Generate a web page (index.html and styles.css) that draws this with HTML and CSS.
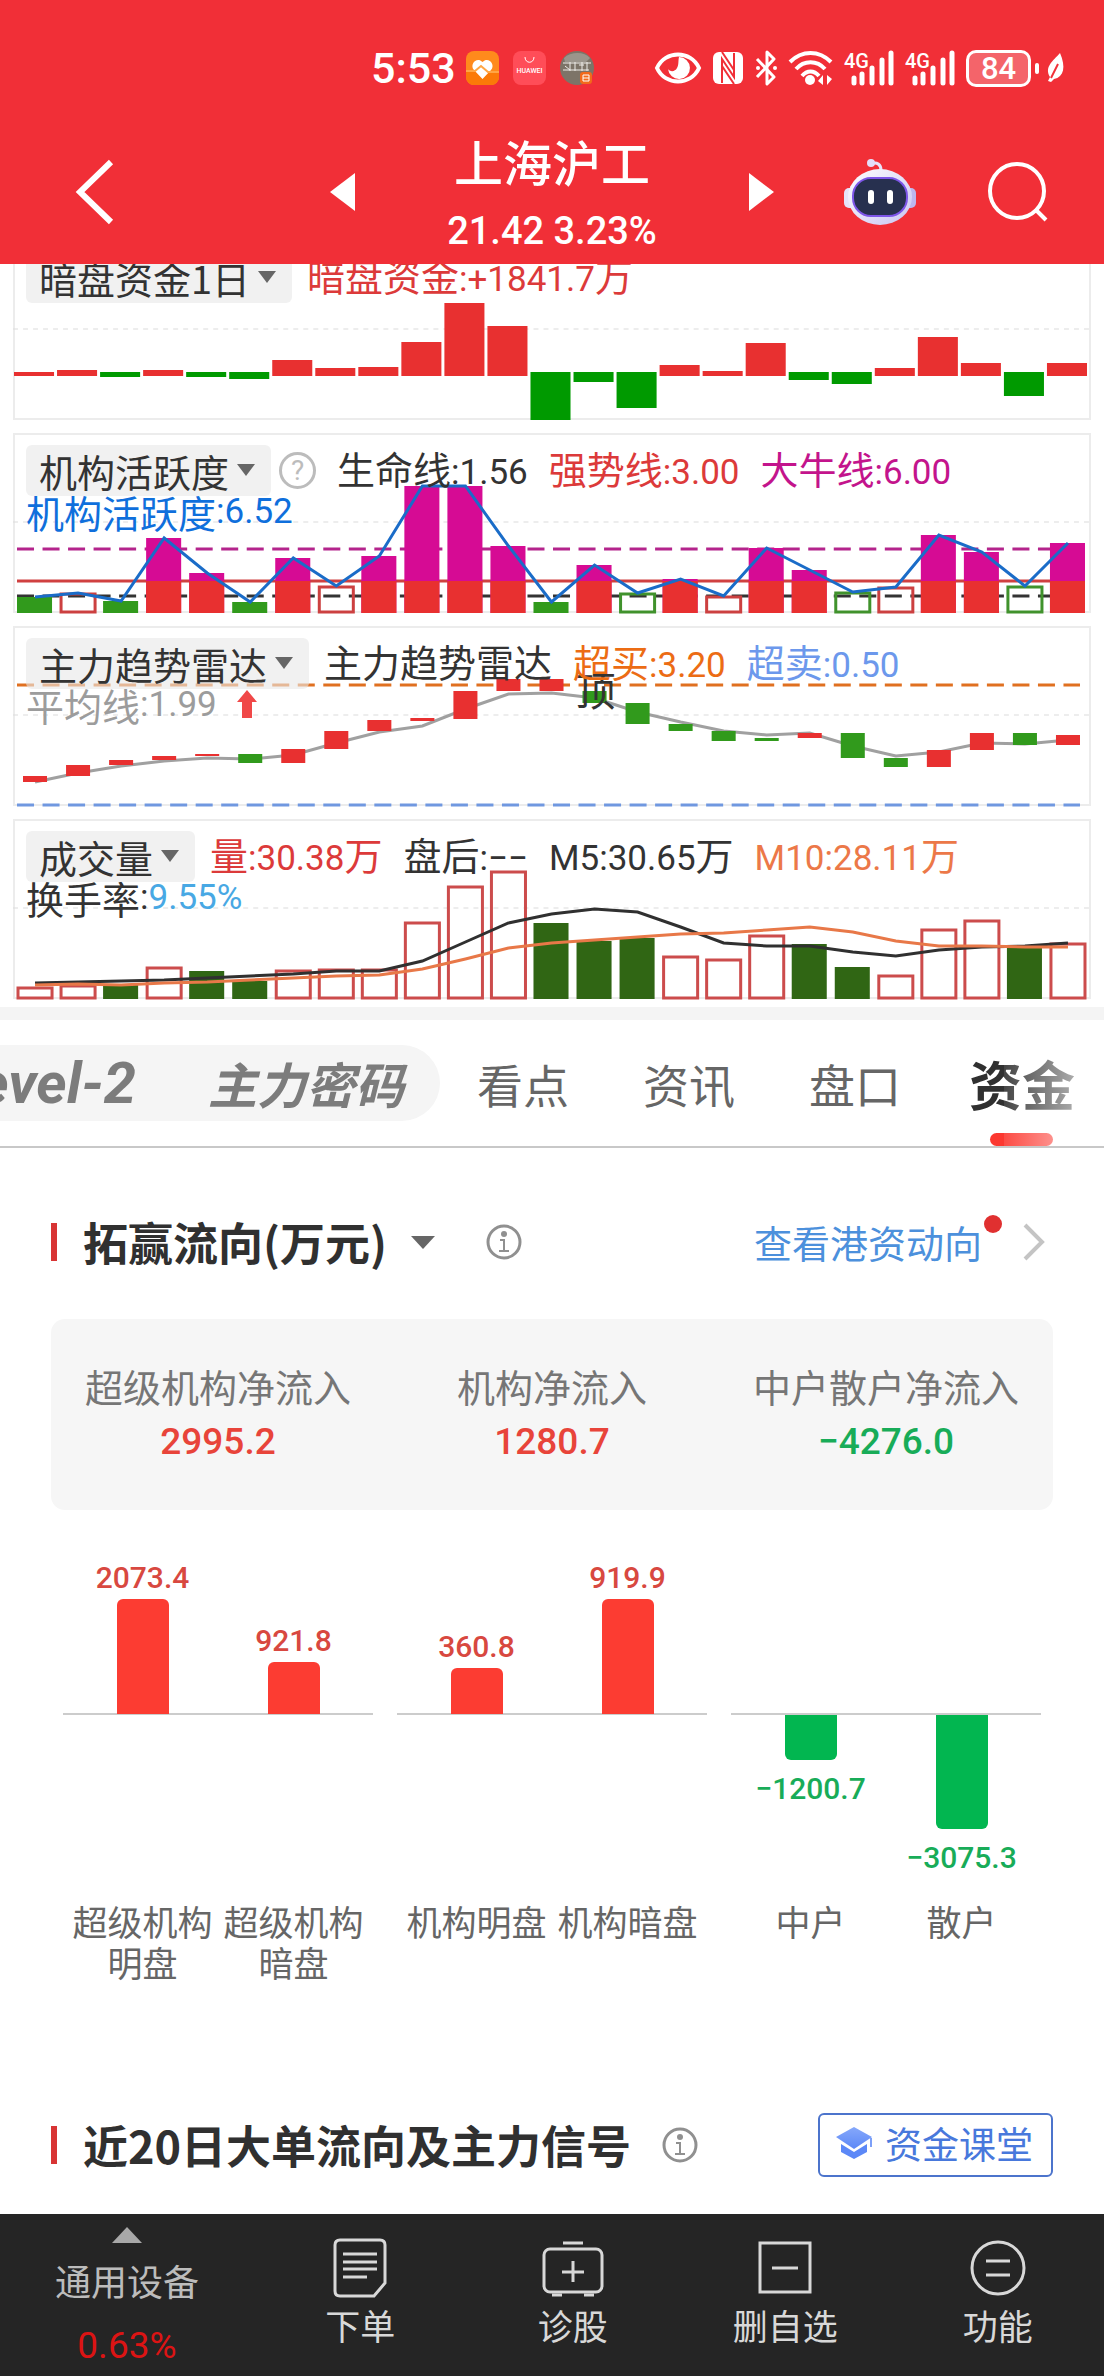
FILE: index.html
```
<!DOCTYPE html>
<html lang="zh-CN">
<head>
    <meta charset="UTF-8">
    <meta name="viewport" content="width=device-width, initial-scale=1.0">
    <title>上海沪工 21.42 3.23%</title>
    <link rel="stylesheet" href="styles.css">
</head>
<body>
<header class="top">
    <div class="status">
        <span class="clock">5:53</span>
        <div class="status-apps">
            <svg width="33" height="34" viewBox="0 0 33 34">
                <rect width="33" height="34" rx="8" fill="#ff8a1c"/>
                <path d="M0 20h33v6a8 8 0 0 1-8 8H8a8 8 0 0 1-8-8z" fill="#fb7a08"/>
                <path d="M16.500 28 8 19c-5-6 3-14 8.500-8C22 5 30 13 25 19z" fill="#fff"/>
                <path d="M0 20h9l6-5 7 6h11" fill="none" stroke="#ffa645" stroke-width="2"/>
            </svg>
            <svg width="33" height="34" viewBox="0 0 33 34">
                <rect width="33" height="34" rx="8" fill="#ff4d58"/>
                <path d="M12 6c0 7 9 7 9 0" fill="none" stroke="#fff" stroke-width="1"/>
                <text x="16.500" y="22" class="brand">HUAWEI</text>
            </svg>
            <svg width="34" height="34" viewBox="0 0 34 34">
                <circle cx="17" cy="17" r="17" fill="#7d7468"/>
                <path d="M4 7c6-6 20-7 26 0l-4 4H5z" fill="#9b958c"/>
                <path d="M3 12h28M5 15l5 4M10 11v9M15 11v9M19 14h5M22 11v9M27 11v9M3 19h26" stroke="#f0eeea" stroke-width="1"/>
                <rect x="20" y="21" width="12" height="12" rx="3" fill="#f26a1b"/>
                <path d="M23 24h6v6h-6zM23 27h6" fill="none" stroke="#fff" stroke-width="1"/>
            </svg>
        </div>
        <div class="status-icons">
            <svg width="46" height="34" viewBox="0 0 46 34">
                <path d="M2 17C10-1 36-1 44 17 36 35 10 35 2 17z" fill="none" stroke="#fff" stroke-width="4"/>
                <path d="M24 6a11 11 0 1 1-11 12c2 3 7 3 9-1 2-3 1-7 2-11z" fill="#fff"/>
            </svg>
            <svg width="32" height="34" viewBox="0 0 32 34">
                <rect x="1" y="1" width="30" height="32" rx="6" fill="#fff"/>
                <path d="M10 32V8l12 18V2" fill="none" stroke="#f12f37" stroke-width="2"/>
                <path d="M10 1l12 18" fill="none" stroke="#f12f37" stroke-width="2"/>
                <path d="M10 15l12 18" fill="none" stroke="#f12f37" stroke-width="2"/>
            </svg>
            <svg width="22" height="36" viewBox="0 0 22 36">
                <path d="M2 9 19 27l-7 7V2l7 7L2 27" fill="none" stroke="#fff" stroke-width="3" stroke-linejoin="round"/>
                <circle cx="3" cy="18" r="2" fill="#fff"/><circle cx="20" cy="18" r="2" fill="#fff"/>
            </svg>
            <svg width="45" height="36" viewBox="0 0 45 36">
                <path d="M2 12c12-12 29-12 41 0M8 19c8-9 21-9 29 0M14 26c5-6 12-6 17 0" fill="none" stroke="#fff" stroke-width="4"/>
                <circle cx="22" cy="30" r="5" fill="#fff"/>
                <path d="M30 31l5-6v10zM44 29l-5 6V25z" fill="#fff"/>
            </svg>
            <svg width="50" height="36" viewBox="0 0 50 36">
                <text x="0" y="18" class="net">4G</text>
                <path d="M10 28v5M18 24v9M28 18v15M38 10v23M47 3v30" stroke="#fff" stroke-width="5" stroke-linecap="round"/>
            </svg>
            <svg width="50" height="36" viewBox="0 0 50 36">
                <text x="0" y="18" class="net">4G</text>
                <path d="M10 28v5M18 24v9M28 18v15M38 10v23M47 3v30" stroke="#fff" stroke-width="5" stroke-linecap="round"/>
            </svg>
            <span class="battery">84</span>
            <svg width="18" height="30" viewBox="0 0 18 30">
                <path d="M14 0c6 14 4 24-6 26l-3 3-3-1 2-4C-2 14 7 8 14 0z" fill="#fff"/>
                <path d="M5 25 12 11" stroke="#f12f37" stroke-width="2"/>
            </svg>
        </div>
    </div>
    <div class="nav">
        <div class="nav-left">
            <button class="icon-btn" aria-label="返回">
                <svg width="38" height="66" viewBox="0 0 38 66"><path d="M35 3 4 33l31 30" fill="none" stroke="#fff" stroke-width="6"/></svg>
            </button>
        </div>
        <div class="nav-center">
            <button class="icon-btn" aria-label="上一只">
                <svg width="25" height="38" viewBox="0 0 25 38"><path d="M25 0v38L0 19z" fill="#fff"/></svg>
            </button>
            <div class="stock">
                <h1>上海沪工</h1>
                <p>21.42 3.23%</p>
            </div>
            <button class="icon-btn" aria-label="下一只">
                <svg width="25" height="38" viewBox="0 0 25 38"><path d="M0 0v38l25-19z" fill="#fff"/></svg>
            </button>
        </div>
        <div class="nav-right">
            <button class="icon-btn" aria-label="智能助手">
                <svg width="72" height="68" viewBox="0 0 72 68">
                    <defs>
                        <linearGradient id="shell" x1="0" y1="0" x2="1" y2="1">
                            <stop offset="0" stop-color="#fff"/><stop offset="1" stop-color="#c9c4f2"/>
                        </linearGradient>
                    </defs>
                    <path d="M27 6c6-3 10 1 10 6" fill="none" stroke="#e8e4fb" stroke-width="3"/>
                    <circle cx="27" cy="5" r="4" fill="#e4defa"/>
                    <rect x="0" y="30" width="12" height="20" rx="5" fill="#e6e3fa"/>
                    <rect x="60" y="30" width="12" height="20" rx="5" fill="#bdb6ee"/>
                    <ellipse cx="36" cy="39" rx="32" ry="28" fill="url(#shell)"/>
                    <rect x="9" y="20" width="54" height="38" rx="18" fill="#27304f" stroke="#7d55e8" stroke-width="2"/>
                    <rect x="24" y="32" width="6" height="14" rx="3" fill="#fff"/>
                    <rect x="43" y="32" width="6" height="14" rx="3" fill="#fff"/>
                </svg>
            </button>
            <button class="icon-btn" aria-label="搜索">
                <svg width="60" height="60" viewBox="0 0 60 60"><circle cx="29" cy="29" r="27" fill="none" stroke="#fff" stroke-width="4"/><path d="m48 48 10 10" stroke="#fff" stroke-width="4"/></svg>
            </button>
        </div>
    </div>
</header>

<main>
    <section class="charts">
        <div class="panel">
            <svg class="plot" id="darkFund" viewBox="0 0 1077 180" preserveAspectRatio="none"></svg>
            <div class="panel-head">
                <div class="row">
                    <label class="pick"><select aria-label="指标一"><option>暗盘资金1日</option></select><i></i></label>
                    <div class="legend"><span class="red">暗盘资金<b>:+1841.7</b>万</span></div>
                </div>
            </div>
        </div>
        <div class="panel">
            <svg class="plot" id="activity" viewBox="0 0 1077 180" preserveAspectRatio="none"></svg>
            <div class="panel-head">
                <div class="row">
                    <label class="pick"><select aria-label="指标二"><option>机构活跃度</option></select><i></i></label>
                    <button class="help" aria-label="说明">?</button>
                    <div class="legend">
                        <span>生命线<b>:1.56</b></span>
                        <span class="red">强势线<b>:3.00</b></span>
                        <span class="magenta">大牛线<b>:6.00</b></span>
                    </div>
                </div>
                <div class="row-2 blue">机构活跃度<b>:6.52</b></div>
            </div>
        </div>
        <div class="panel">
            <svg class="plot" id="radar" viewBox="0 0 1077 180" preserveAspectRatio="none"></svg>
            <div class="panel-head">
                <div class="row">
                    <label class="pick"><select aria-label="指标三"><option>主力趋势雷达</option></select><i></i></label>
                    <div class="legend">
                        <span>主力趋势雷达</span>
                        <span class="orange">超买<b>:3.20</b></span>
                        <span class="sky">超卖<b>:0.50</b></span>
                    </div>
                </div>
                <div class="row-2 gray">平均线<b>:1.99</b>
                    <svg class="up" width="20" height="28" viewBox="0 0 20 28"><path d="M10 0 20 12h-5v16H5V12H0z" fill="#f04848"/></svg>
                </div>
            </div>
        </div>
        <div class="panel">
            <svg class="plot" id="volume" viewBox="0 0 1077 180" preserveAspectRatio="none"></svg>
            <div class="panel-head">
                <div class="row">
                    <label class="pick"><select aria-label="指标四"><option>成交量</option></select><i></i></label>
                    <div class="legend">
                        <span class="red">量<b>:30.38</b>万</span>
                        <span>盘后<b>:−−</b></span>
                        <span><b>M5:30.65</b>万</span>
                        <span class="coral"><b>M10:28.11</b>万</span>
                    </div>
                </div>
                <div class="row-2">换手率<b>:</b><b class="cyan">9.55%</b></div>
            </div>
        </div>
    </section>

    <nav class="tabs">
        <div class="tab-pill">
            <a href="#" class="level">Level-2</a>
            <a href="#">主力密码</a>
        </div>
        <a href="#">看点</a>
        <a href="#">资讯</a>
        <a href="#">盘口</a>
        <a href="#" class="active">资金</a>
    </nav>

    <section class="flow">
        <div class="section-title">
            <h2>拓赢流向(万元)</h2>
            <button class="caret" aria-label="切换单位"></button>
            <button class="icon-btn info" aria-label="说明">
                <svg width="36" height="36" viewBox="0 0 36 36"><circle cx="18" cy="18" r="16" fill="none" stroke="#909090" stroke-width="3"/><circle cx="18" cy="10" r="3" fill="#909090"/><path d="M14 16h4v10M13 27h10" fill="none" stroke="#909090" stroke-width="2"/></svg>
            </button>
            <a href="#" class="more">查看港资动向
                <svg width="22" height="38" viewBox="0 0 22 38"><path d="m2 2 17 17L2 36" fill="none" stroke="#c4c4c4" stroke-width="4"/></svg>
            </a>
        </div>

        <div class="summary">
            <div><p>超级机构净流入</p><strong class="up-text">2995.2</strong></div>
            <div><p>机构净流入</p><strong class="up-text">1280.7</strong></div>
            <div><p>中户散户净流入</p><strong class="down-text">−4276.0</strong></div>
        </div>

        <div class="flow-chart" id="flowChart"></div>
    </section>

    <section class="signal">
        <div class="section-title">
            <h2>近20日大单流向及主力信号</h2>
            <button class="icon-btn info" aria-label="说明">
                <svg width="36" height="36" viewBox="0 0 36 36"><circle cx="18" cy="18" r="16" fill="none" stroke="#909090" stroke-width="3"/><circle cx="18" cy="10" r="3" fill="#909090"/><path d="M14 16h4v10M13 27h10" fill="none" stroke="#909090" stroke-width="2"/></svg>
            </button>
            <button class="course">
                <svg width="36" height="32" viewBox="0 0 36 32">
                    <defs><linearGradient id="cap" x1="0" y1="0" x2="0" y2="1"><stop offset="0" stop-color="#86a8fa"/><stop offset="1" stop-color="#5c88f7"/></linearGradient></defs>
                    <path d="M18 0 36 10 18 22 0 10z" fill="url(#cap)"/>
                    <path d="m5 17 13 8 13-8v8l-13 7-13-7z" fill="#5c88f7"/>
                    <path d="M35 11v9" stroke="#7da0f8" stroke-width="2"/>
                </svg>
                资金课堂
            </button>
        </div>
    </section>
</main>

<footer class="bottom">
    <button class="sector">
        <i></i>
        <span>通用设备</span>
        <em>0.63%</em>
    </button>
    <button>
        <svg width="60" height="60" viewBox="0 0 60 60" class="line"><path d="M10 2h40q5 0 5 5v38L44 58H10q-5 0-5-5V7q0-5 5-5z"/><path d="M13 16h34M13 24h34M13 31h34M13 39h24"/></svg>
        下单
    </button>
    <button>
        <svg width="64" height="60" viewBox="0 0 64 60" class="line"><rect x="3" y="11" width="58" height="43" rx="6"/><path d="M22 5h20M32 23v21M21 34h22M11 57h10M43 57h10"/></svg>
        诊股
    </button>
    <button>
        <svg width="60" height="60" viewBox="0 0 60 60" class="line"><rect x="5" y="5" width="50" height="49"/><path d="M17 30h26"/></svg>
        删自选
    </button>
    <button>
        <svg width="60" height="60" viewBox="0 0 60 60" class="line"><circle cx="30" cy="30" r="26"/><path d="M18 23h24M18 37h24"/></svg>
        功能
    </button>
</footer>
<script src="script.js"></script>
</body>
</html>
```
FILE: styles.css
```
* {
    box-sizing: border-box;
}

body {
    margin: 0;
    font-family: "Noto Sans CJK SC", sans-serif;
    background-color: #fff;
    color: #333;
}

h1, h2, p {
    margin: 0;
}

button {
    font-family: inherit;
    border: none;
    background: none;
    padding: 0;
    cursor: pointer;
}

a {
    text-decoration: none;
    color: inherit;
}

svg {
    display: block;
    flex-shrink: 0;
    overflow: visible;
}

b, strong, em, .clock, .battery, .stock p {
    font-family: Roboto, "Noto Sans CJK SC", sans-serif;
    font-style: normal;
}

/* header */
.top {
    position: sticky;
    top: 0;
    z-index: 10;
    height: 264px;
    background-color: #f12f37;
    color: #fff;
}

.status {
    display: flex;
    align-items: center;
    height: 136px;
    padding: 0 40px 0 371px;
}

.clock {
    font-size: 43px;
    font-weight: 500;
    margin-right: 10px;
}

.status-apps {
    display: flex;
    gap: 14px;
}

.status-icons {
    display: flex;
    align-items: center;
    gap: 11px;
    margin-left: auto;
}

.brand {
    font: 500 7px Roboto, sans-serif;
    fill: #fff;
    text-anchor: middle;
}

.net {
    font: 500 20px Roboto, sans-serif;
    fill: #fff;
}

.battery {
    position: relative;
    width: 65px;
    height: 37px;
    margin-right: 4px;
    border: 3px solid #fff;
    border-radius: 10px;
    background-color: #f4646a;
    font-size: 31px;
    font-weight: 500;
    line-height: 31px;
    text-align: center;
}

.battery::after {
    content: "";
    position: absolute;
    right: -11px;
    top: 10px;
    width: 4px;
    height: 11px;
    border-radius: 2px;
    background-color: #fff;
}

.icon-btn {
    display: block;
}

.nav {
    display: grid;
    grid-template-columns: 1fr 444px 1fr;
    align-items: center;
    height: 110px;
}

.nav-left, .nav-right {
    display: flex;
    align-items: center;
}

.nav-left {
    padding-left: 76px;
}

.nav-right {
    justify-content: flex-end;
    gap: 72px;
    padding-right: 56px;
}

.nav-center {
    display: flex;
    align-items: center;
    justify-content: space-between;
}

.stock {
    text-align: center;
}

.stock h1 {
    font-size: 49px;
    font-weight: 500;
    line-height: 50px;
}

.stock p {
    margin-top: 28px;
    font-size: 38px;
    font-weight: 500;
    line-height: 34px;
}

/* indicator panels */
.charts {
    display: flex;
    flex-direction: column;
    gap: 13px;
    margin-top: -24px;
    padding: 0 13px 8px;
    border-bottom: 13px solid #f4f4f4;
}

.panel {
    position: relative;
    font-size: 38px;
    box-shadow: inset 0 0 0 2px #ececec;
}

.plot {
    width: 100%;
    height: 180px;
}

.plot text {
    font-size: 40px;
    fill: #333;
}

.panel-head {
    position: absolute;
    top: 12px;
    left: 13px;
    right: 0;
}

.panel b {
    font-weight: 400;
    font-size: 35px;
}

.row {
    display: flex;
    align-items: center;
    height: 51px;
}

.pick {
    position: relative;
}

.pick select {
    appearance: none;
    display: block;
    height: 51px;
    padding: 0 41px 0 13px;
    border: none;
    border-radius: 6px;
    background-color: rgba(232, 232, 232, 0.6);
    color: #333;
    font: 400 38px/50px "Noto Sans CJK SC", sans-serif;
}

.pick i {
    position: absolute;
    right: 16px;
    top: 19px;
    border: 9px solid transparent;
    border-top: 12px solid #666;
    border-bottom: none;
}

.help {
    width: 37px;
    height: 37px;
    margin: 0 6px 0 8px;
    border: 3px solid #bcbcbc;
    border-radius: 50%;
    color: #bcbcbc;
    font: 400 28px/30px Roboto, sans-serif;
}

.legend {
    display: flex;
    gap: 21px;
    padding: 0 0 6px 15px;
    white-space: nowrap;
}

.row-2 {
    display: flex;
    align-items: center;
    height: 30px;
    white-space: nowrap;
}

.up {
    margin-left: 20px;
}

.red { color: #dc3a3a; }
.magenta { color: #c3148c; }
.blue { color: #0f6fdc; }
.orange { color: #ec6c14; }
.sky { color: #6c98ec; }
.gray { color: #9c9c9c; }
.coral { color: #ec7848; }
.cyan { color: #48a8e4; }

/* tabs */
.tabs {
    position: relative;
    display: flex;
    align-items: center;
    gap: 74px;
    height: 128px;
    border-bottom: 2px solid #c8c8c8;
    color: #666;
    font-size: 46px;
    line-height: 76px;
    white-space: nowrap;
    overflow: hidden;
}

.tab-pill {
    display: flex;
    justify-content: flex-end;
    align-items: center;
    flex-shrink: 0;
    gap: 72px;
    width: 440px;
    height: 76px;
    margin-right: -37px;
    padding-right: 36px;
    overflow: hidden;
    border-radius: 0 38px 38px 0;
    background-color: #f5f5f5;
    color: #7c7c7c;
    font-size: 49px;
    font-weight: 700;
    font-style: italic;
}

.tab-pill .level {
    font-family: Roboto, sans-serif;
    font-size: 58px;
}

.tabs .active {
    position: relative;
    margin-left: -6px;
    color: #303030;
    font-size: 53px;
    font-weight: 700;
    line-height: 126px;
}

.tabs .active::after {
    content: "";
    position: absolute;
    left: 21px;
    bottom: 0;
    width: 63px;
    height: 13px;
    border-radius: 7px;
    background-color: #fc3830;
}

.tabs::after {
    content: "";
    position: absolute;
    top: 0;
    right: 0;
    bottom: 0;
    width: 100px;
    background: linear-gradient(to right, rgba(255, 255, 255, 0.1), rgba(255, 255, 255, 0.8));
}

/* fund flow */
.flow, .signal {
    padding: 0 51px;
}

.section-title {
    display: flex;
    align-items: center;
    height: 64px;
}

.section-title h2 {
    display: flex;
    align-items: center;
    font-size: 45px;
    font-weight: 700;
    line-height: 60px;
    color: #303030;
}

.section-title h2::before {
    content: "";
    width: 6px;
    height: 38px;
    margin-right: 26px;
    background-color: #d83434;
}

.flow .section-title {
    margin-top: 62px;
}

.caret {
    margin-left: 24px;
    border: 12px solid transparent;
    border-top: 13px solid #666;
    border-bottom: none;
}

.info {
    margin-left: 31px;
}

.caret + .info {
    margin-left: 51px;
}

.more {
    position: relative;
    display: flex;
    align-items: center;
    gap: 41px;
    margin-left: auto;
    padding-right: 8px;
    color: #4c90dc;
    font-size: 38px;
    line-height: 56px;
}

.more::after {
    content: "";
    position: absolute;
    right: 51px;
    top: 1px;
    width: 18px;
    height: 18px;
    border-radius: 50%;
    background-color: #e03030;
}

.summary {
    display: grid;
    grid-template-columns: repeat(3, 1fr);
    margin-top: 45px;
    padding: 40px 0 40px;
    border-radius: 14px;
    background-color: #f6f6f6;
    text-align: center;
}

.summary p {
    color: #767676;
    font-size: 38px;
    line-height: 54px;
}

.summary strong {
    display: block;
    font-size: 37px;
    font-weight: 500;
    line-height: 57px;
}

.up-text { color: #e8443a; }
.down-text { color: #18ac58; }

.flow-chart {
    display: grid;
    grid-template-columns: repeat(3, 1fr);
    gap: 24px;
    margin-top: 40px;
    padding: 0 12px;
}

.bars {
    display: grid;
    grid-template-columns: 1fr 1fr;
    height: 330px;
    padding: 0 4px;
    background: linear-gradient(#ccc, #ccc) 0 163px / 100% 2px no-repeat;
}

.bar-col {
    display: flex;
    flex-direction: column;
    align-items: center;
}

.bar-col b {
    font-size: 30px;
    font-weight: 500;
    line-height: 42px;
}

.bar-col.plus {
    justify-content: flex-end;
    height: 164px;
    color: #d84840;
}

.bar-col.minus {
    padding-top: 165px;
    color: #18ac58;
}

.bar {
    width: 52px;
    border-radius: 6px 6px 0 0;
    background-color: #fc3c32;
}

.minus .bar {
    margin-bottom: 8px;
    border-radius: 0 0 6px 6px;
    background-color: #02b650;
}

.labels {
    display: grid;
    grid-template-columns: 1fr 1fr;
    min-height: 82px;
    margin-top: 20px;
    padding: 0 4px;
}

.labels span {
    padding: 0 4px;
    color: #666;
    font-size: 35px;
    line-height: 41px;
    text-align: center;
}

.signal {
    padding-top: 131px;
    padding-bottom: 37px;
}

.course {
    display: flex;
    align-items: center;
    gap: 13px;
    height: 64px;
    margin-left: auto;
    padding: 0 18px 4px 16px;
    border: 2px solid #4c74cc;
    border-radius: 6px;
    color: #4878dc;
    font-size: 37px;
}

/* bottom bar */
.bottom {
    position: sticky;
    bottom: 0;
    display: flex;
    height: 162px;
    background-color: #252525;
}

.bottom button {
    display: flex;
    flex: 1;
    flex-direction: column;
    align-items: center;
    padding-top: 24px;
    color: #d8d8d8;
    font-size: 35px;
    line-height: 54px;
}

.bottom .sector {
    flex: 0 0 23%;
    padding-top: 13px;
    color: #bcbcbc;
    font-size: 36px;
}

.sector i {
    border: 15px solid transparent;
    border-bottom: 16px solid #a8a8a8;
    border-top: none;
}

.sector span {
    margin-top: 10px;
}

.sector em {
    margin-top: 12px;
    color: #dc1414;
    font-size: 37px;
}

.line {
    fill: none;
    stroke: #d8d8d8;
    stroke-width: 3;
}
```
FILE: script.js
```
const STEP = 43;
const RED = '#e83030';
const GREEN = '#319a1c';

function rect(x, y, w, h, color) {
    return `<rect x="${x}" y="${y}" width="${w}" height="${h}" fill="${color}"/>`;
}

function hollow(i, y, color) {
    return `<rect x="${5 + i * STEP}" y="${y + 1}" width="34" height="${178 - y}" fill="none" stroke="${color}" stroke-width="3"/>`;
}

function hline(y, color, width, dash) {
    return `<path d="M4 ${y}H1066" stroke="${color}" stroke-width="${width}" stroke-dasharray="${dash || 'none'}"/>`;
}

function curve(values, color) {
    const points = values.map((y, i) => `${22 + i * STEP},${y}`).join(' ');
    return `<polyline points="${points}" fill="none" stroke="${color}" stroke-width="3"/>`;
}

function draw(id, parts) {
    const grid = '<path d="M0 89H1077" stroke="#dcdcdc" stroke-width="1" stroke-dasharray="5 5"/>';
    document.getElementById(id).innerHTML = grid + parts.join('');
}

// 暗盘资金: 136 is the foot of red bars, 132 the top of green ones
const darkFund = [132, 130, -137, 130, -137, -139, 120, 128, 127, 102, 63, 86, -180, -142, -168, 125, 131, 103, -140, -144, 128, 97, 123, -156, 123];
draw('darkFund', darkFund.map((v, i) => v > 0
    ? rect(1 + i * STEP, v, 40, 136 - v, RED)
    : rect(1 + i * STEP, 132, 40, -v - 132, '#009a00')));

// 机构活跃度: g/r filled, G/R hollow
const activity = [164, 160, 168, 105, 140, 169, 125, 153, 123, 53, 53, 113, 169, 132, 160, 146, 163, 115, 137, 159, 154, 102, 119, 153, 110];
const activityKind = 'gRgrrgrRrrrrgrGrRrrGRrrGr';
draw('activity', [
    hline(116, '#b4248c', 3, '17 8.5'),
    hline(148, '#d04040', 3),
    hline(163, '#333', 3, '17 8.5'),
    ...activity.map((y, i) => {
        const kind = activityKind[i];
        const x = 4 + i * STEP;
        if (kind === 'R') return hollow(i, y, '#cc4040');
        if (kind === 'G') return hollow(i, y, '#40922c');
        if (kind === 'g') return rect(x, y, 35, 180 - y, GREEN);
        return rect(x, y, 35, 180 - y, '#d60b94') + rect(x, Math.max(y, 148), 35, 180 - Math.max(y, 148), RED);
    }),
    curve(activity, '#1a6cc8')
]);

// 主力趋势雷达
const candles = [[150, 156], [139, 150], [134, 139], [130, 134], [128, 130], [128, 137], [123, 137], [105, 123], [94, 105], [92, 95], [65, 93], [53, 65], [53, 65], [65, 77], [77, 98], [98, 105], [105, 115], [112, 115], [107, 112], [107, 132], [132, 141], [124, 141], [107, 124], [107, 119], [109, 119]];
const candleKind = 'rrrrrgrrrrrrrgggggrggrrgr';
const average = [156, 147, 140, 135, 132, 133, 129, 117, 106, 100, 83, 68, 67, 72, 86, 96, 105, 109, 107, 120, 130, 126, 117, 118, 114];
draw('radar', [
    hline(59, '#e07020', 3, '17 8.5'),
    hline(179, '#7098e0', 3, '17 8.5'),
    curve(average, '#a0a0a0'),
    ...candles.map(([top, foot], i) => rect(10 + i * STEP, top, 24, foot - top, candleKind[i] === 'r' ? RED : GREEN)),
    '<text x="562" y="80">顶</text>'
]);

// 成交量
const volume = [168, 166, 166, 148, 152, 162, 151, 150, 150, 103, 67, 52, 104, 122, 119, 137, 140, 116, 125, 148, 156, 110, 101, 129, 124];
const volumeKind = 'RRgRggRRRRRRgggRRRggRRRgR';
const m5 = [164, 163, 162, 161, 159, 157, 155, 152, 152, 142, 123, 104, 95, 90, 93, 108, 124, 127, 127, 133, 137, 131, 128, 127, 124];
const m10 = [166, 165, 166, 164, 163, 161, 159, 157, 156, 150, 140, 129, 124, 121, 118, 115, 114, 111, 108, 113, 122, 127, 127, 128, 128];
draw('volume', [
    ...volume.map((y, i) => volumeKind[i] === 'R'
        ? hollow(i, y, '#cc4c4c')
        : rect(4 + i * STEP, y, 35, 180 - y, '#306614')),
    curve(m5, '#303030'),
    curve(m10, '#e87848')
]);

// 拓赢流向
const groups = [
    [['超级机构明盘', '2073.4', 115], ['超级机构暗盘', '921.8', 52]],
    [['机构明盘', '360.8', 46], ['机构暗盘', '919.9', 115]],
    [['中户', '−1200.7', 45], ['散户', '−3075.3', 114]]
];
document.getElementById('flowChart').innerHTML = groups.map(group => {
    const bars = group.map(([, value, size]) => {
        const bar = `<div class="bar" style="height: ${size}px"></div>`;
        return value[0] === '−'
            ? `<div class="bar-col minus">${bar}<b>${value}</b></div>`
            : `<div class="bar-col plus"><b>${value}</b>${bar}</div>`;
    }).join('');
    const labels = group.map(([name]) => `<span>${name}</span>`).join('');
    return `<div><div class="bars">${bars}</div><div class="labels">${labels}</div></div>`;
}).join('');
```
